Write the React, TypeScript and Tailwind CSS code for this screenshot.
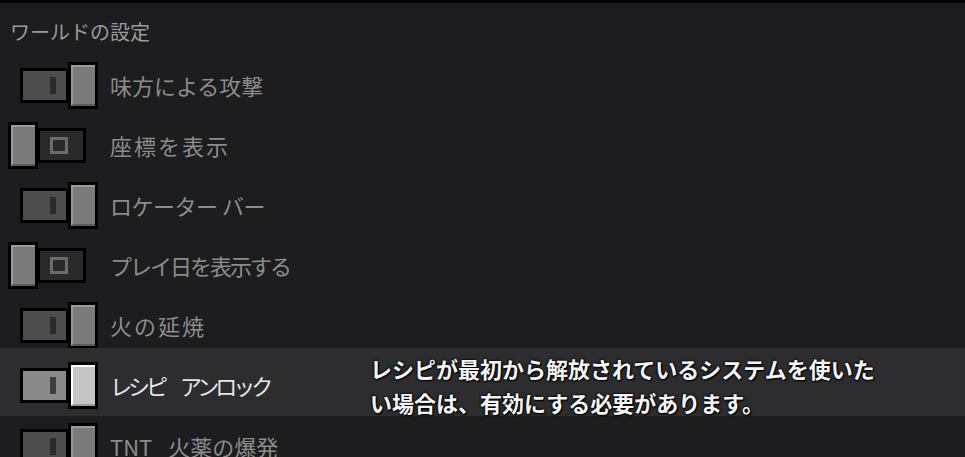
import React from "react";

type Row = { label: string; on: boolean; active?: boolean; track: string };

const rows: Row[] = [
  { label: "味方による攻撃", on: true, track: "tracking-normal" },
  { label: "座標を表示", on: false, track: "tracking-[2px]" },
  { label: "ロケーター バー", on: true, track: "tracking-[-0.5px]" },
  { label: "プレイ日を表示する", on: false, track: "tracking-[-2px]" },
  { label: "火の延焼", on: true, track: "tracking-[2px]" },
  { label: "レシピ アンロック", on: true, active: true, track: "tracking-[-4px]" },
  { label: "TNT\u2002 火薬の爆発", on: true, track: "tracking-normal" },
];

const font = "font-['Noto_Sans_CJK_JP','Noto_Sans',sans-serif]";

function Knob({ active }: { active?: boolean }) {
  return (
    <div className="h-[47px] w-[30px] shrink-0 border-[3px] border-black bg-black">
      {active ? (
        <div className="h-full w-full border-l-[2px] border-t-[2px] border-b-[2px] border-l-white border-t-white border-b-[#9c9c9c] bg-[#c6c6c6]" />
      ) : (
        <div className="h-full w-full border-l-[2px] border-t-[2px] border-b-[2px] border-l-[#9a9a9a] border-t-[#9a9a9a] border-b-[#5c5c5c] bg-[#7a7a7a]" />
      )}
    </div>
  );
}

function Toggle({ on, active }: { on: boolean; active?: boolean }) {
  if (on) {
    return (
      <div className="ml-[20px] flex items-center">
        <div
          className={`flex h-[35px] w-[49px] items-center border-[3px] border-black ${
            active ? "bg-[#8a8a8a]" : "bg-[#4d4d4d]"
          }`}
        >
          <div
            className={`ml-[27px] h-[17px] w-[6px] ${
              active ? "bg-[#3e3e3e]" : "bg-[#2c2c2c]"
            }`}
          />
        </div>
        <div className="-ml-[1px]">
          <Knob active={active} />
        </div>
      </div>
    );
  }
  return (
    <div className="ml-[8px] flex items-center">
      <Knob />
      <div className="-ml-[1px] flex h-[35px] w-[49px] items-center border-[3px] border-black bg-[#2a2a2a]">
        <div className="ml-[10px] h-[17px] w-[18px] border-[3px] border-[#6b6b6b]" />
      </div>
    </div>
  );
}

export default function App() {
  return (
    <div className={`h-[457px] w-[965px] overflow-hidden bg-[#1d1d1f] ${font}`}>
      <div className="h-[3px] bg-black" />
      <div className="flex h-[52px] items-start pl-[10px] pt-[15px] text-[20px] leading-[28px] text-[#9a9a9a]">
        ワールドの設定
      </div>
      {rows.map((r, i) => {
        if (r.active) {
          const [a, b] = r.label.split(" ");
          return (
            <div
              key={i}
              className="relative flex h-[68px] items-start bg-[#2d2d30] pt-[14px]"
            >
              <div className="flex w-[110px] items-center">
                <Toggle on={r.on} active />
              </div>
              <div className={`mt-[8px] flex gap-[16px] whitespace-pre text-[22px] leading-[30px] text-[#e6e6e6] ${r.track}`}>
                <span>{a}</span>
                <span>{b}</span>
              </div>
              <div className="absolute left-[370px] top-[3px] text-[22px] font-bold leading-[34px] text-[#f4f4f4] [text-shadow:0_0_3px_#000,0_0_2px_#000,1px_1px_1px_#000]">
                <div>レシピが最初から解放されているシステムを使いた</div>
                <div>い場合は、有効にする必要があります。</div>
              </div>
            </div>
          );
        }
        return (
          <div
            key={i}
            className={`flex ${i === 4 ? "h-[53px] items-start pt-[7px]" : "h-[60px] items-center"}`}
          >
            <div className="flex w-[110px] items-center">
              <Toggle on={r.on} />
            </div>
            <div
              className={`whitespace-pre text-[22px] leading-[30px] text-[#8c8c8c] ${r.track} ${i === 4 ? "mt-[8px]" : ""}`}
            >
              {r.label}
            </div>
          </div>
        );
      })}
    </div>
  );
}
